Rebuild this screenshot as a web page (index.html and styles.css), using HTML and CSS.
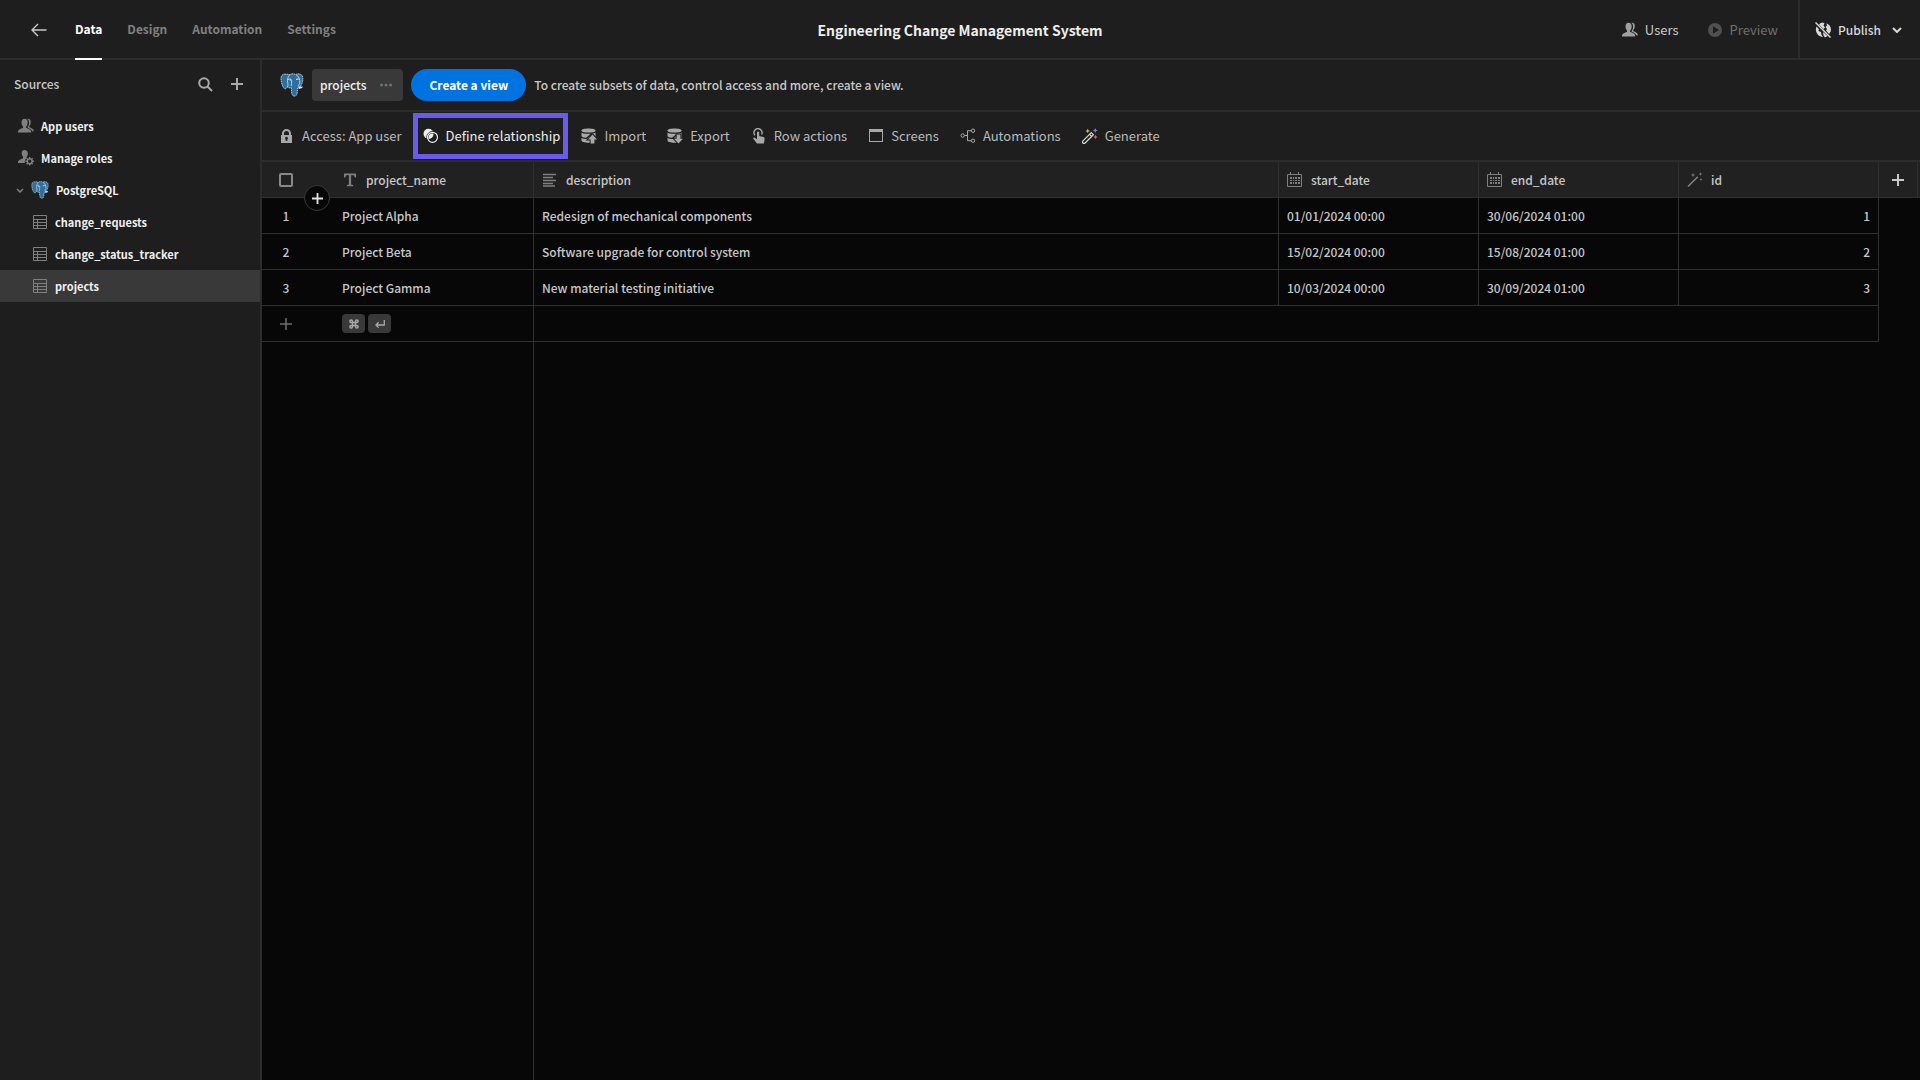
FILE: index.html
```html
<!DOCTYPE html>
<html lang="en">
<head>
    <meta charset="utf-8">
    <title>Engineering Change Management System</title>
    <link rel="stylesheet" href="styles.css">
</head>
<body>
    <!-- Shared icons -->
    <svg class="sprite" aria-hidden="true">
        <symbol id="icon-postgres" viewBox="0 0 24 24">
            <path fill="#2f6f9f" stroke="#dfe8ef" stroke-width=".8" stroke-dasharray="1.600 0.700" d="M5.200 1.200C2 .9.8 3.200 1 6c.2 3 1.500 8 3.300 9.600 1 .9 2-.2 3.200-1.600.6.7 1.700 1 2.900.9.400 0 .8-.2 1-.3-.1 3 .2 5.600 1 7.400.7 1.500 3.700 1.500 4.400-.6.6-2 .5-4.200.7-6 .9.5 2.900.3 4.800-1.100-1.500.2-2 0-2.100-.4C22 11 23.400 7.600 22.700 4 21.900.8 18.400.2 15.600 1.500 14 .6 11.600.5 9.800 1.600 8.300 1.200 6.700 1 5.200 1.200z"/>
            <path fill="none" stroke="#dfe8ef" stroke-width=".8" d="M9.800 1.800C7.400 4 7.200 7 7.700 9.600c.3 1.700.5 3-.2 4.200M15.800 1.600c3 1.600 4.500 5 4 8.300-.4 1.600-1.400 1.600-1 3.600M8 6.500c1.700-1 3.600-.6 3.700 1.200.1 1.700-.4 3.400-.5 5.400M16 6.400c1.300-.8 3.300-.4 3.800 0"/>
            <path fill="#dfe8ef" d="M9.600 6.500h1.300v1H9.600zM16.300 6h1.300v1h-1.300zM18.500 13.500l4.500.3-2 1.400-2.500-.2z"/>
        </symbol>
        <symbol id="icon-users" viewBox="0 0 16 16">
            <path d="M6.600.8C4.600.8 3.500 2.300 3.500 4.600c0 1.700.6 3 1.500 3.900.3.300.2 1.300-.3 1.600C3 10.900.2 11.500 0 13.800V14.500h13.200v-.7c-.2-2.300-3-2.900-4.700-3.700-.5-.3-.6-1.300-.3-1.600.9-.9 1.500-2.200 1.500-3.900 0-2.300-1.100-3.800-3.100-3.800z"/>
            <path d="M9.300.8C12 .2 13 2.200 12.800 4.500c-.1 1.500-.6 2.700-1.400 3.500-.3.300-.2 1 .3 1.300 1.900.9 4.100 1.500 4.300 3.900h-1.900c-.6-1.700-2.100-2.500-4.200-3.400-.4-.3-.4-.9-.1-1.200.9-1 1.400-2.200 1.300-4C11 2.800 10.500 1.500 9.300.8z"/>
        </symbol>
        <symbol id="icon-table" viewBox="0 0 14 14">
            <path fill="none" stroke="currentColor" d="M.5.5h13v13H.5zM.5 4.500h13M4.500 4.500v9M.5 7.500h13M.5 10.500h13"/>
        </symbol>
        <symbol id="icon-calendar" viewBox="0 0 16 16">
            <path fill="none" stroke="currentColor" d="M.5 2.500h14v12H.5zM3.500 0v3M11.500 0v3"/>
            <path d="M3 5h2v2H3zM6 5h1v2H6zM8 5h2v2H8zM11 5h2v2h-2zM3 8h2v1H3zM6 8h1v1H6zM8 8h2v1H8zM11 8h2v1h-2zM3 10h2v2H3zM6 10h1v2H6zM8 10h2v2H8zM11 10h2v2h-2z"/>
        </symbol>
        <symbol id="icon-plus" viewBox="0 0 12 12">
            <path d="M5 0h2v5h5v2H7v5H5V7H0V5h5z"/>
        </symbol>
        <symbol id="icon-database" viewBox="0 0 16 16">
            <path d="M7.500.5c-4 0-7 .8-7 2v10c0 1.400 3 2.200 7 2.200s7-.8 7-2.200v-10c0-1.200-3-2-7-2z"/>
            <path fill="none" stroke="#1e1e1e" stroke-width="1.200" d="M0 3.300c1 1.400 4 1.800 7.500 1.800s6.500-.4 7.500-1.800M0 8.500c1 1.300 3 1.800 5.500 1.800L11 5.500"/>
        </symbol>
    </svg>

    <header class="topbar">
        <nav class="tabs">
            <a class="back" href="#" aria-label="Back">
                <svg width="16" height="14" viewBox="0 0 16 14" fill="none" stroke="currentColor" stroke-width="1.400"><path d="M15.500 7H1M7 1L1 7l6 6"/></svg>
            </a>
            <a class="tab active" href="#">Data</a>
            <a class="tab" href="#">Design</a>
            <a class="tab" href="#">Automation</a>
            <a class="tab" href="#">Settings</a>
        </nav>
        <h1 class="app-title">Engineering Change Management System</h1>
        <div class="top-actions">
            <button class="top-button" type="button">
                <svg class="icon" width="16" height="16"><use href="#icon-users"/></svg>
                Users
            </button>
            <button class="top-button dimmed" type="button">
                <svg class="icon" width="16" height="16" viewBox="0 0 16 16"><path fill-rule="evenodd" d="M8 1a7 7 0 1 0 0 14A7 7 0 0 0 8 1zM6 4.200L12 8l-6 3.800z"/></svg>
                Preview
            </button>
            <button class="top-button publish" type="button">
                <svg class="icon" width="16" height="16" viewBox="0 0 16 16">
                    <path d="M5 1.500A7.500 7.500 0 0 1 8 .5l1.500 1-1 2 1.500 2-1.500 1.500L4 2.500zM11.500 1.200a7.500 7.500 0 0 1 4.200 8.300L14 12l-3-3.500 1-1.500-1.500-2 1.500-1.500zM1.500 4.500L4 7l-.5 2 2.500 1 .5 3 1.500 2A7.500 7.500 0 0 1 1.500 4.500zM8 10l4.500 4-2.500 1.500-1.500-2z"/>
                    <path fill="none" stroke="currentColor" stroke-width="1.500" d="M.5.5l15 15"/>
                </svg>
                Publish
                <svg class="caret" width="10" height="6" viewBox="0 0 10 6" fill="none" stroke="currentColor" stroke-width="2"><path d="M1 1l4 4 4-4"/></svg>
            </button>
        </div>
    </header>

    <div class="workspace">
        <aside class="sidebar">
            <div class="sidebar-head">
                <h2>Sources</h2>
                <button type="button" aria-label="Search">
                    <svg width="15" height="15" viewBox="0 0 15 15" fill="none" stroke="currentColor" stroke-width="2"><circle cx="6" cy="6" r="4.800"/><path d="M9.500 9.500l4.500 4.500"/></svg>
                </button>
                <button type="button" aria-label="Add source">
                    <svg class="icon" width="12" height="12"><use href="#icon-plus"/></svg>
                </button>
            </div>
            <nav class="source-list">
                <a class="source" href="#">
                    <svg class="icon" width="16" height="16"><use href="#icon-users"/></svg>
                    App users
                </a>
                <a class="source" href="#">
                    <svg class="icon" width="16" height="16" viewBox="0 0 16 16">
                        <path d="M6.500 0C4.500 0 3.700 1.500 3.700 3.300c0 1.500.6 2.700 1.300 3.500.3.400.2 1.300-.3 1.600C3 9.200.2 9.700 0 12v1h6.800c-.3-2 .5-4 2-5-.4-.4-.4-.9-.1-1.200.7-.8 1.200-2 1.200-3.500C9.900 1.500 8.500 0 6.500 0z"/>
                        <circle cx="11.700" cy="11.300" r="2.400" fill="none" stroke="currentColor" stroke-width="1.400"/>
                        <path fill="none" stroke="currentColor" stroke-width="1.400" d="M11.700 7v2M11.700 13.600v2M7.400 11.300h2M14 11.300h2M8.700 8.300l1.300 1.300M13.400 13l1.300 1.300M14.700 8.300l-1.300 1.300M10 13l-1.300 1.300"/>
                    </svg>
                    Manage roles
                </a>
                <a class="source parent" href="#">
                    <svg class="icon" width="8" height="5" viewBox="0 0 8 5" fill="none" stroke="currentColor" stroke-width="1.500"><path d="M1 1l3 3 3-3"/></svg>
                    <svg width="18" height="18"><use href="#icon-postgres"/></svg>
                    PostgreSQL
                </a>
                <a class="source child" href="#">
                    <svg class="icon" width="14" height="14"><use href="#icon-table"/></svg>
                    change_requests
                </a>
                <a class="source child" href="#">
                    <svg class="icon" width="14" height="14"><use href="#icon-table"/></svg>
                    change_status_tracker
                </a>
                <a class="source child selected" href="#">
                    <svg class="icon" width="14" height="14"><use href="#icon-table"/></svg>
                    projects
                </a>
            </nav>
        </aside>

        <main class="content">
            <div class="view-bar">
                <svg class="view-logo" width="24" height="24"><use href="#icon-postgres"/></svg>
                <button class="view-tab" type="button">
                    projects
                    <svg width="12" height="4" viewBox="0 0 12 4"><circle cx="1.500" cy="2" r="1.500"/><circle cx="6" cy="2" r="1.500"/><circle cx="10.500" cy="2" r="1.500"/></svg>
                </button>
                <button class="create-view" type="button">Create a view</button>
                <p class="hint">To create subsets of data, control access and more, create a view.</p>
            </div>

            <div class="toolbar">
                <button class="tool" type="button">
                    <svg class="icon" width="16" height="16" viewBox="0 0 16 16"><path fill-rule="evenodd" d="M2 7h1V5.500a4.500 4.500 0 0 1 9 0V7h1v8H2zm3 0h5V5.500a2.500 2.500 0 0 0-5 0zm2.500 1.800a1.500 1.500 0 0 0-.8 2.700V13h1.600v-1.500a1.500 1.500 0 0 0-.8-2.700z"/></svg>
                    Access: App user
                </button>
                <button class="tool highlighted" type="button">
                    <svg class="icon" width="16" height="16" viewBox="0 0 16 16">
                        <circle cx="5.500" cy="5.700" r="5"/>
                        <circle cx="9.500" cy="9.300" r="5" fill="none" stroke="#1e1e1e" stroke-width="2.400"/>
                        <circle cx="9.500" cy="9.300" r="5" fill="none" stroke="currentColor" stroke-width="1.200"/>
                        <path d="M10.400 6.500a5 5 0 0 1-5.200 4.200 5 5 0 0 1 5.200-4.200z"/>
                    </svg>
                    Define relationship
                </button>
                <button class="tool" type="button">
                    <svg class="icon" width="16" height="16" viewBox="0 0 16 16"><use href="#icon-database"/><path stroke="#1e1e1e" stroke-width="2" paint-order="stroke" d="M11.500 6.500l4.500 5h-2.600V15.500H9.600v-4H7z"/></svg>
                    Import
                </button>
                <button class="tool" type="button">
                    <svg class="icon" width="16" height="16" viewBox="0 0 16 16"><use href="#icon-database"/><path stroke="#1e1e1e" stroke-width="2" paint-order="stroke" d="M9.600 6.500h3.800v4.300H16L11.500 15.500 7 10.800h2.600z"/></svg>
                    Export
                </button>
                <button class="tool" type="button">
                    <svg class="icon" width="16" height="16" viewBox="0 0 16 16">
                        <path fill="none" stroke="currentColor" stroke-width="1.400" d="M4 7.300A4 4 0 1 1 10.600 6.500"/>
                        <path d="M6 4.500a1.100 1.100 0 0 1 2.200 0V8l4.200.9c.9.200 1.300.8 1.200 1.600L13 15.500H6L2.500 11c-.8-1 .3-2 1.300-1.300L6 11.200z"/>
                    </svg>
                    Row actions
                </button>
                <button class="tool" type="button">
                    <svg class="icon" width="16" height="16" viewBox="0 0 16 16"><path fill-rule="evenodd" d="M1 1h14v13H1zm1 3v9h12V4z"/></svg>
                    Screens
                </button>
                <button class="tool" type="button">
                    <svg class="icon" width="16" height="16" viewBox="0 0 16 16" fill="none" stroke="currentColor"><circle cx="2.700" cy="7.500" r="1.700"/><circle cx="13" cy="2.700" r="1.700"/><circle cx="13" cy="12.700" r="1.700"/><path d="M4.500 7.500h3M11.300 2.700H7.500v10h3.800"/></svg>
                    Automations
                </button>
                <button class="tool" type="button">
                    <svg class="icon" width="16" height="16" viewBox="0 0 16 16">
                        <path fill="none" stroke="#d8d8d8" stroke-width="1.200" d="M9.300 4.600l2.100 2.100-8.300 8.300a1.480 1.480 0 0 1-2.100-2.100zM7.600 6.300l2.100 2.100"/>
                        <path fill="#e5b53c" d="M5.700.8l.7 1.500 1.600.7-1.600.7-.7 1.500L5 3.700 3.500 3 5 2.300z"/>
                        <path fill="#7f7fe8" d="M13.200 0l.8 1.700 1.700.7-1.700.8-.8 1.700-.7-1.700-1.700-.8 1.700-.7z"/>
                        <path fill="#e8604c" d="M13.500 6.800l.7 1.500 1.500.7-1.500.7-.7 1.500-.7-1.500-1.500-.7 1.500-.7z"/>
                    </svg>
                    Generate
                </button>
            </div>

            <div class="grid">
                <table class="rows">
                    <colgroup>
                        <col class="col-gutter">
                        <col class="col-field">
                        <col>
                        <col class="col-field">
                        <col class="col-field">
                        <col class="col-field">
                        <col class="col-add">
                    </colgroup>
                    <thead>
                        <tr>
                            <th class="gutter">
                                <input class="check" type="checkbox" aria-label="Select all rows">
                                <button class="insert" type="button" aria-label="Insert row">
                                    <svg class="icon" width="11" height="11"><use href="#icon-plus"/></svg>
                                </button>
                            </th>
                            <th>
                                <div class="field">
                                    <svg class="icon" width="16" height="14" viewBox="0 0 16 14"><path d="M2 .5h12V4.500h-1.300L12 2.300H9.100v9.200l2 .5V13.300H4.900V12l2-.5V2.300H4l-.7 2.200H2z"/></svg>
                                    project_name
                                </div>
                            </th>
                            <th>
                                <div class="field">
                                    <svg class="icon" width="16" height="14" viewBox="0 0 16 14" stroke="currentColor" stroke-width="1.500"><path d="M1 1.500h13M1 4.500h10M1 7.500h13M1 10.500h10M1 13h12"/></svg>
                                    description
                                </div>
                            </th>
                            <th>
                                <div class="field">
                                    <svg class="icon" width="16" height="16"><use href="#icon-calendar"/></svg>
                                    start_date
                                </div>
                            </th>
                            <th>
                                <div class="field">
                                    <svg class="icon" width="16" height="16"><use href="#icon-calendar"/></svg>
                                    end_date
                                </div>
                            </th>
                            <th>
                                <div class="field">
                                    <svg class="icon" width="16" height="16" viewBox="0 0 16 16">
                                        <path fill="none" stroke="currentColor" stroke-width="1.600" d="M1 14.500L10.800 4.700"/>
                                        <path d="M6 .8l.6 1.600 1.600.6-1.600.6L6 5.200l-.6-1.600L3.800 3l1.600-.6zM13.500 0l.5 1.500 1.500.5-1.500.5-.5 1.500-.5-1.500-1.500-.5 1.500-.5zM14 6l.4 1.100 1.100.4-1.100.4L14 9l-.4-1.100-1.100-.4 1.100-.4z"/>
                                    </svg>
                                    id
                                </div>
                            </th>
                            <th class="add-cell">
                                <button class="add-column" type="button" aria-label="Add column">
                                    <svg class="icon" width="12" height="12"><use href="#icon-plus"/></svg>
                                </button>
                            </th>
                        </tr>
                    </thead>
                    <tbody>
                        <tr>
                            <td class="gutter"><span class="row-number">1</span></td>
                            <td>Project Alpha</td>
                            <td>Redesign of mechanical components</td>
                            <td>01/01/2024 00:00</td>
                            <td>30/06/2024 01:00</td>
                            <td class="number">1</td>
                        </tr>
                        <tr>
                            <td class="gutter"><span class="row-number">2</span></td>
                            <td>Project Beta</td>
                            <td>Software upgrade for control system</td>
                            <td>15/02/2024 00:00</td>
                            <td>15/08/2024 01:00</td>
                            <td class="number">2</td>
                        </tr>
                        <tr>
                            <td class="gutter"><span class="row-number">3</span></td>
                            <td>Project Gamma</td>
                            <td>New material testing initiative</td>
                            <td>10/03/2024 00:00</td>
                            <td>30/09/2024 01:00</td>
                            <td class="number">3</td>
                        </tr>
                        <tr>
                            <td class="gutter">
                                <button class="new-row" type="button" aria-label="Add row">
                                    <svg width="12" height="12" viewBox="0 0 12 12" stroke="currentColor" stroke-width="1.500"><path d="M6 0v12M0 6h12"/></svg>
                                </button>
                            </td>
                            <td>
                                <div class="keys">
                                    <kbd><svg width="10" height="10" viewBox="0 0 10 10" fill="none" stroke="currentColor" stroke-width="1.500"><path d="M3.500 3.500h3v3h-3zM3.500 3.500H2.200a1.300 1.300 0 1 1 1.300-1.300zM6.500 3.500V2.200a1.300 1.300 0 1 1 1.300 1.300zM6.500 6.500h1.300a1.300 1.300 0 1 1-1.300 1.300zM3.500 6.500v1.300a1.300 1.300 0 1 1-1.300-1.300z"/></svg></kbd>
                                    <kbd><svg width="10" height="8" viewBox="0 0 10 8" fill="none" stroke="currentColor" stroke-width="1.300"><path d="M9.300 0v5H1M3.600 2.300L1 5l2.600 2.600"/></svg></kbd>
                                </div>
                            </td>
                            <td colspan="4"></td>
                        </tr>
                    </tbody>
                </table>
                <div class="sticky-edge"></div>
            </div>
        </main>
    </div>
</body>
</html>
```

FILE: styles.css
```css
* {
    box-sizing: border-box;
}

body {
    margin: 0;
    min-height: 100vh;
    display: flex;
    flex-direction: column;
    background: #1e1e1e;
    color: #c8c8c8;
    font-family: "Noto Sans CJK SC", "Noto Sans", sans-serif;
    font-size: 12px;
    line-height: 20px;
}

h1, h2, p {
    margin: 0;
}

a {
    color: inherit;
    text-decoration: none;
}

button {
    display: flex;
    align-items: center;
    padding: 0;
    border: none;
    background: none;
    color: inherit;
    font: inherit;
    white-space: nowrap;
    cursor: pointer;
}

svg {
    flex-shrink: 0;
}

.sprite {
    display: none;
}

.icon {
    fill: currentColor;
}

.icon[fill="none"] {
    fill: none;
}

/* Top bar */
.topbar {
    display: grid;
    grid-template-columns: 1fr auto 1fr;
    height: 60px;
    border-bottom: 2px solid #2c2c2c;
}

.tabs {
    display: flex;
    gap: 25px;
    padding-left: 31px;
}

.back {
    display: flex;
    align-items: center;
    margin-right: 3px;
}

.tab {
    display: flex;
    align-items: center;
    height: 60px;
    border-bottom: 2px solid transparent;
    color: #808080;
    font-weight: bold;
}

.tab.active {
    border-color: #fff;
    color: #fff;
}

.app-title {
    align-self: center;
    color: #eee;
    font-size: 14px;
    font-weight: bold;
}

.top-actions {
    display: flex;
    justify-content: flex-end;
}

.top-button {
    gap: 7px;
    margin-right: 28px;
    font-size: 13px;
}

.top-button .icon {
    color: #a0a0a0;
}

.top-button.dimmed {
    margin-right: 20px;
    color: #707070;
}

.top-button.dimmed .icon {
    color: #505050;
}

.top-button.publish {
    margin: 0;
    padding: 0 18px 0 15px;
    border-left: 2px solid #2c2c2c;
    color: #d8d8d8;
    font-size: 12px;
    font-weight: 500;
}

.top-button.publish .icon {
    color: #d8d8d8;
}

.caret {
    margin-left: 4px;
}

/* Sidebar */
.workspace {
    flex: 1;
    display: flex;
}

.sidebar {
    flex: 0 0 262px;
    border-right: 2px solid #2c2c2c;
}

.sidebar-head {
    display: flex;
    align-items: center;
    gap: 18px;
    height: 48px;
    padding: 0 17px 0 14px;
    color: #a8a8a8;
}

.sidebar-head h2 {
    flex: 1;
    color: #c8c8c8;
    font-size: 12px;
    font-weight: 500;
}

.source-list {
    padding-top: 2px;
}

.source {
    display: flex;
    align-items: center;
    gap: 7px;
    height: 32px;
    padding-left: 18px;
    color: #f0f0f0;
    font-size: 11px;
    font-weight: bold;
}

.source .icon {
    color: #808080;
}

.source.parent {
    padding-left: 16px;
}

.source.child {
    gap: 8px;
    padding-left: 33px;
}

.source.selected {
    background: #393939;
}

/* View bar */
.content {
    flex: 1;
    display: flex;
    flex-direction: column;
    min-width: 0;
}

.view-bar {
    display: flex;
    align-items: center;
    gap: 8px;
    height: 52px;
    padding-left: 18px;
    border-bottom: 2px solid #2c2c2c;
    font-weight: 500;
}

.view-tab {
    gap: 14px;
    height: 32px;
    padding: 0 11px 0 8px;
    border-radius: 4px;
    background: #393939;
    color: #eee;
    font-weight: 500;
}

.view-tab svg {
    fill: #707070;
}

.create-view {
    height: 32px;
    padding: 0 18px;
    border-radius: 16px;
    background: #0073e0;
    color: #fff;
    font-weight: bold;
}

/* Toolbar */
.toolbar {
    display: flex;
    align-items: center;
    gap: 21px;
    height: 50px;
    padding-left: 17px;
    border-bottom: 2px solid #2c2c2c;
    font-size: 13px;
}

.tool {
    position: relative;
    gap: 7px;
    color: #bababa;
}

.tool .icon {
    color: #a8a8a8;
}

.tool.highlighted,
.tool.highlighted .icon {
    color: #eee;
}

.tool.highlighted::after {
    content: "";
    position: absolute;
    inset: -13px -8px -13px -10px;
    border: 5px solid #6a5aee;
}

/* Data grid */
.grid {
    flex: 1;
    display: flex;
    flex-direction: column;
    background: #070707;
    font-weight: 500;
}

.rows {
    width: 100%;
    table-layout: fixed;
    border-spacing: 0;
}

.col-gutter {
    width: 72px;
}

.col-field {
    width: 200px;
}

.col-add {
    width: 41px;
}

th, td {
    height: 36px;
    padding: 0 8px;
    border-right: 1px solid #303030;
    border-bottom: 1px solid #303030;
    font-weight: 500;
    text-align: left;
}

th {
    background: #212121;
}

.gutter {
    position: relative;
    padding: 0 0 0 17px;
    border-right: none;
}

.field {
    display: flex;
    align-items: center;
    gap: 8px;
}

.field .icon {
    color: #808080;
}

.check {
    appearance: none;
    display: block;
    width: 14px;
    height: 14px;
    margin: 0;
    border: 2px solid #8a8a8a;
    border-radius: 2px;
}

.insert {
    position: absolute;
    z-index: 1;
    left: 42px;
    bottom: -14px;
    justify-content: center;
    width: 26px;
    height: 26px;
    border: 1px solid #3a3a3a;
    border-radius: 50%;
    background: #070707;
    color: #e0e0e0;
}

.add-cell {
    padding: 0;
    border-right: none;
}

.add-column {
    justify-content: center;
    width: 39px;
    height: 35px;
    border-right: 1px solid #303030;
}

.row-number {
    display: block;
    width: 14px;
    text-align: center;
}

.number {
    text-align: right;
}

.new-row {
    margin-left: 1px;
    color: #707070;
}

.keys {
    display: flex;
    gap: 3px;
}

kbd {
    display: flex;
    align-items: center;
    justify-content: center;
    width: 23px;
    height: 19px;
    border-radius: 4px;
    background: #393939;
    color: #a8a8a8;
}

/* Carries the edge of the pinned column down to the bottom */
.sticky-edge {
    flex: 1;
    width: 272px;
    border-right: 1px solid #303030;
}
```
